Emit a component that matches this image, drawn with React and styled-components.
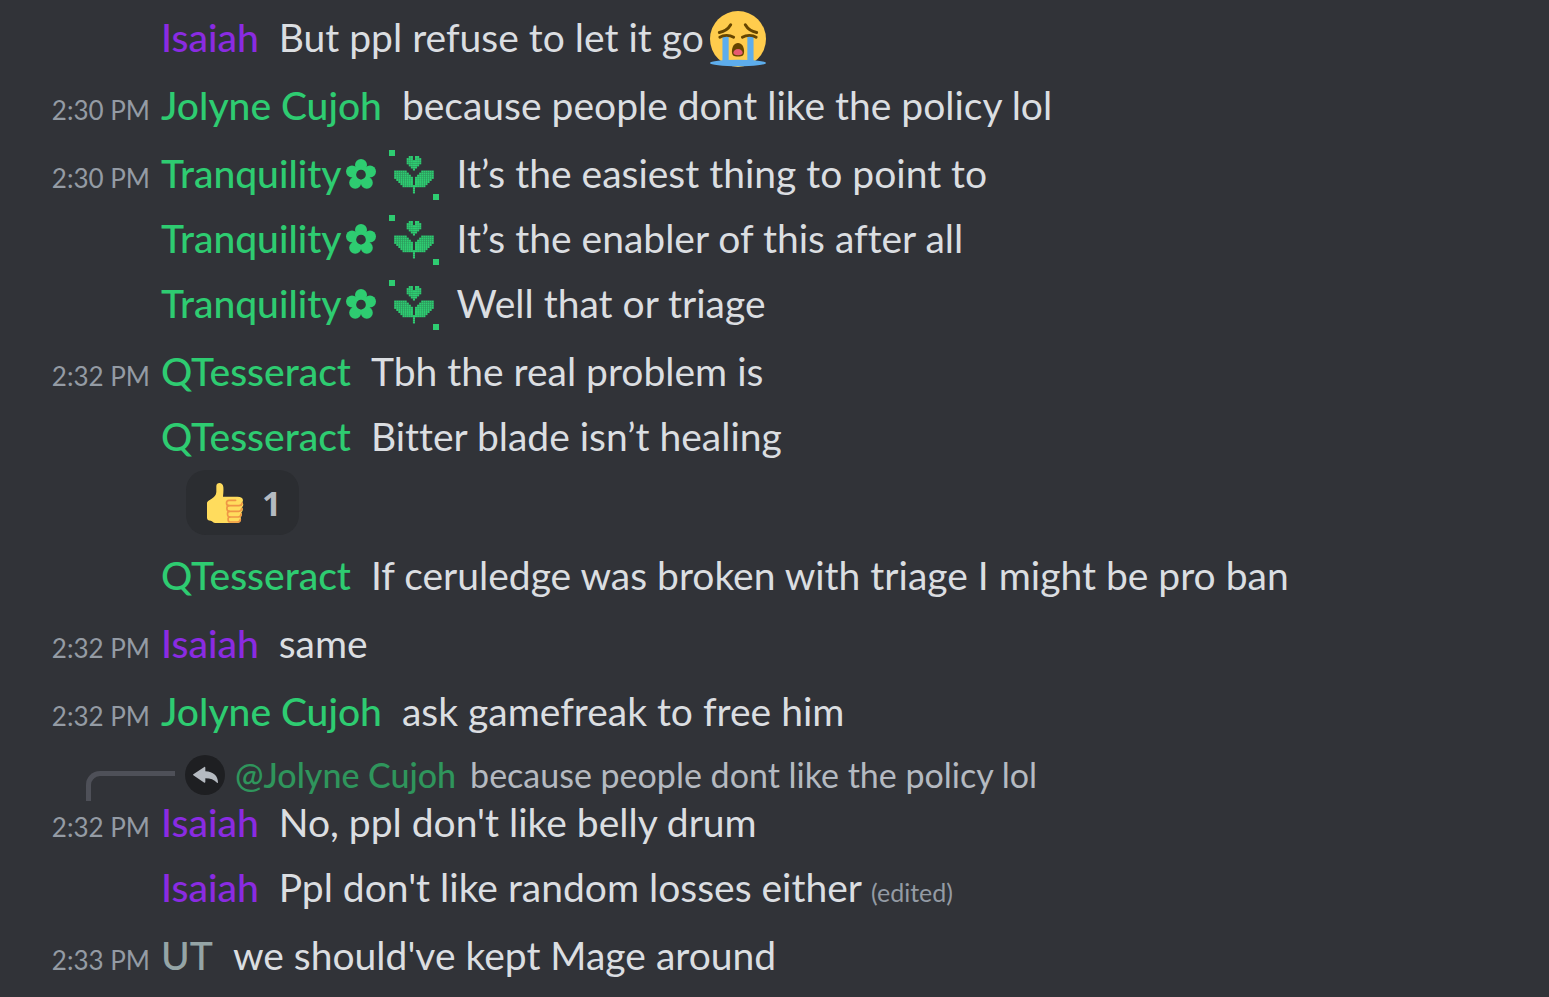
import styled, { createGlobalStyle } from 'styled-components';

const colors = {
    bg: '#313338',
    text: '#dbdee1',
    muted: '#949ba4',
    interactive: '#b5bac1',
    spine: '#4e5058',
    green: '#2ecc71',
    purple: '#8a2be2',
    grey: '#95a5a6',
};

const GlobalStyle = createGlobalStyle`
    * {
        box-sizing: border-box;
    }

    body {
        margin: 0;
        background: ${colors.bg};
        color: ${colors.text};
        font-family: Lato, 'Open Sans', sans-serif;
        font-variant-ligatures: none;
    }
`;

const ChatLog = styled.ol`
    margin: 0;
    padding: 5px 16px 0 0;
    list-style: none;
`;

const MessageGroup = styled.li`
    & + & {
        margin-top: 3px;
    }
`;

const MessageRow = styled.div`
    display: grid;
    grid-template-columns: 150px minmax(0, 1fr);
    column-gap: 11px;
    align-items: baseline;
    font-size: 39px;
    line-height: 65px;
`;

const Timestamp = styled.time`
    grid-column: 1;
    font-size: 26px;
    line-height: 32px;
    text-align: right;
    color: ${colors.muted};
`;

const MessageBody = styled.div`
    grid-column: 2;
`;

const Username = styled.span`
    margin-right: 20px;
    font-weight: 500;
    color: ${props => props.$color};

    svg {
        fill: currentColor;
    }
`;

const FlowerSvg = styled.svg`
    width: 30px;
    height: 30px;
    margin: 0 13px 0 4px;
    vertical-align: -1px;
`;

const TulipSvg = styled.svg`
    width: 50px;
    height: 50px;
    margin-right: -2px;
    vertical-align: -12px;
`;

const EmojiSvg = styled.svg`
    width: 56px;
    height: 56px;
    margin-left: 6px;
    vertical-align: -15px;
`;

const Edited = styled.span`
    margin-left: 9px;
    font-size: 25px;
    line-height: 32px;
    color: ${colors.muted};
`;

const Reactions = styled.div`
    display: flex;
    margin: 1px 0 8px 186px;
`;

const ReactionButton = styled.button`
    display: flex;
    align-items: center;
    gap: 18px;
    height: 65px;
    padding: 0 18px 0 20px;
    border: 0;
    border-radius: 20px;
    background: #2b2d31;
    color: ${colors.interactive};
    font-family: 'Open Sans', 'Noto Sans', sans-serif;
    font-size: 34px;
    font-weight: 700;
    cursor: pointer;
`;

const ThumbSvg = styled.svg`
    width: 38px;
    height: 42px;
`;

const ReplyRow = styled.div`
    display: flex;
    align-items: center;
    gap: 10px;
    height: 43px;
    padding: 12px 0 0 86px;
    font-size: 34px;
    line-height: 40px;
`;

const ReplySpine = styled.div`
    align-self: flex-start;
    flex: none;
    width: 89px;
    height: 30px;
    margin-top: 12px;
    border: solid ${colors.spine};
    border-width: 5px 0 0 5px;
    border-top-left-radius: 14px;
`;

const ReplyBadge = styled.span`
    display: flex;
    flex: none;
    width: 40px;
    height: 40px;
    border-radius: 50%;
    background: #1e1f22;
`;

const ReplyName = styled.span`
    margin-right: 4px;
    font-weight: 500;
    color: ${props => props.$color};
    opacity: 0.64;
`;

const ReplyText = styled.span`
    color: ${colors.interactive};
`;

const FlowerIcon = () => (
    <FlowerSvg viewBox="0 0 30 30" aria-hidden="true">
        <circle cx="15" cy="6" r="6" />
        <circle cx="24" cy="12.6" r="6" />
        <circle cx="20.8" cy="23.8" r="6" />
        <circle cx="9.2" cy="23.8" r="6" />
        <circle cx="6" cy="12.6" r="6" />
        <circle cx="15" cy="15.6" r="7" fill="none" stroke="currentColor" strokeWidth="4.6" />
        <circle cx="15" cy="15.6" r="4.8" fill={colors.bg} />
    </FlowerSvg>
);

const tulipPixels = [
    '.......##.##.......',
    '......###.###......',
    '......#######......',
    '......#######......',
    '.......#####.......',
    '........###........',
    '.........#.........',
    '######.......######',
    '#######.....#######',
    '########...########',
    '#########.#########',
    '.########.########.',
    '..#######.#######..',
    '...######.######...',
    '....###########....',
    '.........#.........',
    '.........#.........',
    '.........#.........',
];

const TulipIcon = () => (
    <TulipSvg viewBox="0 0 50 50" aria-hidden="true">
        <rect width="6" height="6" />
        <rect x="44" y="44" width="6" height="6" />
        <g transform="translate(5.2 6) scale(2.08)">
            {tulipPixels.map((row, y) =>
                [...row].map((cell, x) => (
                    cell === '#' && <rect key={`${x}-${y}`} x={x} y={y} width="1" height="1" />
                ))
            )}
        </g>
    </TulipSvg>
);

const SobEmoji = () => (
    <EmojiSvg viewBox="0 0 36 36" role="img" aria-label="Loudly crying face">
        <circle cx="18" cy="18" r="18" fill="#ffcc4d" />
        <g fill="none" stroke="#664500" strokeWidth="1.9" strokeLinecap="round">
            <path d="M6 13.8C9 13.2 11.8 11.4 13.3 8.8" />
            <path d="M30 13.8C27 13.2 24.2 11.4 22.7 8.8" />
        </g>
        <path d="M8 16.4h4V33H8zM24 16.4h4V33h-4z" fill="#5dadec" />
        <g fill="none" stroke="#664500" strokeWidth="1.8" strokeLinecap="round">
            <path d="M6.3 16.9C8.7 15.3 12.6 15.3 15.2 16.9" />
            <path d="M29.7 16.9C27.3 15.3 23.4 15.3 20.8 16.9" />
        </g>
        <ellipse cx="18" cy="33.4" rx="18" ry="2.1" fill="#5dadec" />
        <path d="M18 20.6c-2.5 0-3.900 2.600-3.900 5.400 0 2.400.9 3.200 3.900 3.200s3.900-.8 3.900-3.200c0-2.800-1.400-5.400-3.900-5.400z" fill="#664500" />
        <path d="M18 24.4c-1.700 0-3 1.200-3 2.500 0 1.100.9 1.500 3 1.500s3-.4 3-1.500c0-1.300-1.300-2.500-3-2.500z" fill="#e75a70" />
    </EmojiSvg>
);

const ThumbsUpEmoji = () => (
    <ThumbSvg viewBox="18 12 114 126" role="img" aria-label="Thumbs up">
        <path
            d="M49 24c0-12 20-12 21 3 1 10 0 19-1 29h43c15 0 20 8 15 17 4 5 4 10-1 15 4 5 3 11-2 15 3 5 2 11-2 15 3 10-2 17-10 17H46c-7 0-8-6-14-7-7-1-11-3-11-9V76c0-7 8-10 14-14 9-6 13-10 14-20z"
            fill="#ffdc5d"
        />
        <g fill="none" stroke="#ef9645" strokeWidth="5" strokeLinecap="round" strokeLinejoin="round">
            <path d="M107 67H87c-10 0-10 16 0 16h30c6 0 9-3 9-8" />
            <path d="M87 83c-9 1-8 17 1 17h28c6 0 9-4 9-9" />
            <path d="M88 100c-8 1-7 17 1 17h26c6 0 8-4 8-9" />
            <path d="M89 117c-7 1-6 15 1 15h23c6 0 8-4 8-8" />
        </g>
    </ThumbSvg>
);

const ReplyIcon = () => (
    <svg viewBox="9 12 120 120" width="40" height="40" aria-hidden="true">
        <path
            d="M34 70 67 48c1-1 3 0 3 2v11c24 1 38 14 38 33 0 2-2 2-3 1-9-9-19-13-35-13v11c0 2-2 3-3 2L34 73q-2-1.500 0-3z"
            fill={colors.interactive}
        />
    </svg>
);

const users = {
    isaiah: { name: 'Isaiah', color: colors.purple },
    jolyne: { name: 'Jolyne Cujoh', color: colors.green },
    tranquility: { name: 'Tranquility', color: colors.green, flowers: true },
    qtesseract: { name: 'QTesseract', color: colors.green },
    ut: { name: 'UT', color: colors.grey },
};

const groups = [
    { user: 'isaiah', messages: [{ text: 'But ppl refuse to let it go', emoji: true }] },
    { user: 'jolyne', time: '2:30 PM', messages: [{ text: 'because people dont like the policy lol' }] },
    {
        user: 'tranquility',
        time: '2:30 PM',
        messages: [
            { text: 'It’s the easiest thing to point to' },
            { text: 'It’s the enabler of this after all' },
            { text: 'Well that or triage' },
        ],
    },
    {
        user: 'qtesseract',
        time: '2:32 PM',
        messages: [
            { text: 'Tbh the real problem is' },
            { text: 'Bitter blade isn’t healing', thumbs: 1 },
            { text: 'If ceruledge was broken with triage I might be pro ban' },
        ],
    },
    { user: 'isaiah', time: '2:32 PM', messages: [{ text: 'same' }] },
    { user: 'jolyne', time: '2:32 PM', messages: [{ text: 'ask gamefreak to free him' }] },
    {
        user: 'isaiah',
        time: '2:32 PM',
        replyTo: { user: 'jolyne', text: 'because people dont like the policy lol' },
        messages: [
            { text: "No, ppl don't like belly drum" },
            { text: "Ppl don't like random losses either", edited: true },
        ],
    },
    { user: 'ut', time: '2:33 PM', messages: [{ text: "we should've kept Mage around" }] },
];

const Reply = ({ user, text }) => (
    <ReplyRow>
        <ReplySpine />
        <ReplyBadge>
            <ReplyIcon />
        </ReplyBadge>
        <ReplyName $color={user.color}>@{user.name}</ReplyName>
        <ReplyText>{text}</ReplyText>
    </ReplyRow>
);

const Message = ({ user, time, message }) => (
    <>
        <MessageRow>
            {time && <Timestamp>{time}</Timestamp>}
            <MessageBody>
                <Username $color={user.color}>
                    {user.name}
                    {user.flowers && <><FlowerIcon /><TulipIcon /></>}
                </Username>
                {message.text}
                {message.emoji && <SobEmoji />}
                {message.edited && <Edited>(edited)</Edited>}
            </MessageBody>
        </MessageRow>
        {message.thumbs && (
            <Reactions>
                <ReactionButton type="button">
                    <ThumbsUpEmoji />
                    <span>{message.thumbs}</span>
                </ReactionButton>
            </Reactions>
        )}
    </>
);

const App = () => (
    <>
        <GlobalStyle />
        <ChatLog>
            {groups.map((group, index) => (
                <MessageGroup key={index}>
                    {group.replyTo && (
                        <Reply user={users[group.replyTo.user]} text={group.replyTo.text} />
                    )}
                    {group.messages.map((message, i) => (
                        <Message
                            key={message.text}
                            user={users[group.user]}
                            time={i === 0 ? group.time : null}
                            message={message}
                        />
                    ))}
                </MessageGroup>
            ))}
        </ChatLog>
    </>
);

export default App;
